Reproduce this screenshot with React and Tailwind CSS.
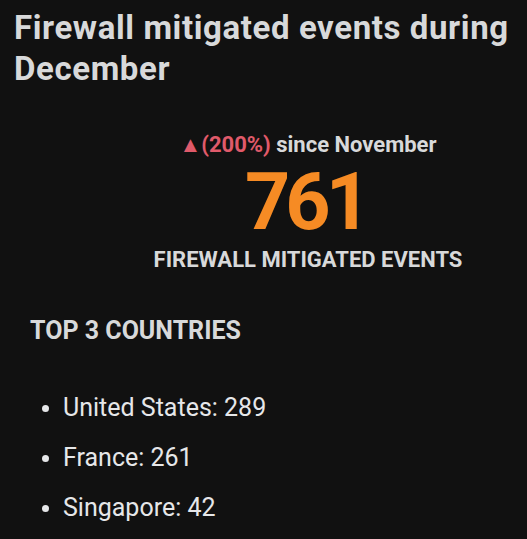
export default function App() {
  const countries = [
    { name: "United States", count: 289 },
    { name: "France", count: 261 },
    { name: "Singapore", count: 42 },
  ];

  return (
    <div
      className="w-[527px] h-[539px] overflow-hidden bg-[#111111] text-[#d8d9da]"
      style={{ fontFamily: "Roboto, 'Liberation Sans', sans-serif" }}
    >
      <h1 className="pl-[14px] pt-[7px] text-[33px] leading-[41px] font-bold tracking-[0.6px]">
        Firewall mitigated events during December
      </h1>

      <div className="mt-[44px] pl-[89px] flex flex-col items-center">
        <div className="text-[22px] leading-[24px] font-bold">
          <span className="text-[#e05a6a]">▲(200%)</span> since November
        </div>
        <div className="mt-[5px] text-[79px] leading-[80px] font-bold tracking-[-5px] pr-[5px] text-[#f68b24]">
          761
        </div>
        <div className="mt-[6px] text-[22px] leading-[24px] font-bold uppercase">
          Firewall mitigated events
        </div>
      </div>

      <h2 className="mt-[43px] pl-[30px] text-[25px] leading-[32px] font-bold">
        TOP 3 COUNTRIES
      </h2>

      <ul className="mt-[36px] text-[25px] leading-[50px] text-[#e6e7e9]">
        {countries.map((c) => (
          <li key={c.name} className="flex items-center">
            <span className="ml-[42px] mr-[14px] w-[7px] h-[7px] rounded-full bg-[#e6e7e9]" />
            <span>
              {c.name}: {c.count}
            </span>
          </li>
        ))}
      </ul>
    </div>
  );
}
